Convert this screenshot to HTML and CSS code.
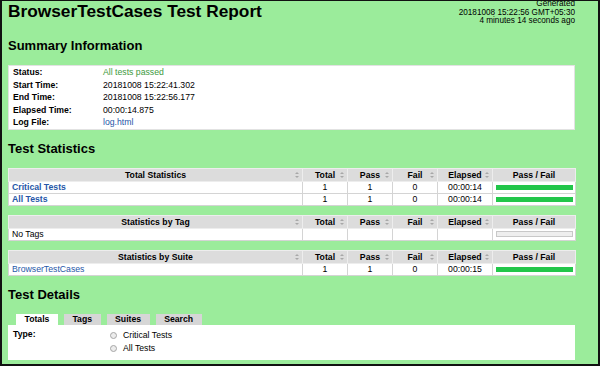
FILE: index.html
```html
<!DOCTYPE html>
<html lang="en">
<head>
    <meta charset="UTF-8">
    <title>BrowserTestCases Test Report</title>
    <link rel="stylesheet" href="styles.css">
</head>
<body>
    <div class="page">
        <div class="header">
            <h1>BrowserTestCases Test Report</h1>
            <div class="generated">
                Generated<br>
                20181008 15:22:56 GMT+05:30<br>
                4 minutes 14 seconds ago
            </div>
        </div>

        <h2>Summary Information</h2>
        <table class="summary">
            <tr><th>Status:</th><td class="pass">All tests passed</td></tr>
            <tr><th>Start Time:</th><td>20181008 15:22:41.302</td></tr>
            <tr><th>End Time:</th><td>20181008 15:22:56.177</td></tr>
            <tr><th>Elapsed Time:</th><td>00:00:14.875</td></tr>
            <tr><th>Log File:</th><td><a href="#">log.html</a></td></tr>
        </table>

        <h2>Test Statistics</h2>
        <table class="stats">
            <colgroup>
                <col class="col-name"><col class="col-num"><col class="col-num"><col class="col-num"><col class="col-time"><col class="col-bar">
            </colgroup>
            <tr>
                <th class="sort">Total Statistics</th>
                <th class="sort">Total</th>
                <th class="sort">Pass</th>
                <th class="sort">Fail</th>
                <th class="sort">Elapsed</th>
                <th>Pass / Fail</th>
            </tr>
            <tr>
                <td class="name"><a href="#">Critical Tests</a></td>
                <td>1</td><td>1</td><td>0</td><td>00:00:14</td>
                <td><div class="bar"></div></td>
            </tr>
            <tr>
                <td class="name"><a href="#">All Tests</a></td>
                <td>1</td><td>1</td><td>0</td><td>00:00:14</td>
                <td><div class="bar"></div></td>
            </tr>
        </table>

        <table class="stats">
            <colgroup>
                <col class="col-name"><col class="col-num"><col class="col-num"><col class="col-num"><col class="col-time"><col class="col-bar">
            </colgroup>
            <tr>
                <th class="sort">Statistics by Tag</th>
                <th class="sort">Total</th>
                <th class="sort">Pass</th>
                <th class="sort">Fail</th>
                <th class="sort">Elapsed</th>
                <th>Pass / Fail</th>
            </tr>
            <tr>
                <td class="name plain">No Tags</td>
                <td></td><td></td><td></td><td></td>
                <td><div class="bar empty"></div></td>
            </tr>
        </table>

        <table class="stats">
            <colgroup>
                <col class="col-name"><col class="col-num"><col class="col-num"><col class="col-num"><col class="col-time"><col class="col-bar">
            </colgroup>
            <tr>
                <th class="sort">Statistics by Suite</th>
                <th class="sort">Total</th>
                <th class="sort">Pass</th>
                <th class="sort">Fail</th>
                <th class="sort">Elapsed</th>
                <th>Pass / Fail</th>
            </tr>
            <tr>
                <td class="name"><a href="#" class="thin">BrowserTestCases</a></td>
                <td>1</td><td>1</td><td>0</td><td>00:00:15</td>
                <td><div class="bar"></div></td>
            </tr>
        </table>

        <h2>Test Details</h2>
        <div class="tabs">
            <div class="tab active">Totals</div>
            <div class="tab">Tags</div>
            <div class="tab">Suites</div>
            <div class="tab">Search</div>
        </div>
        <div class="details">
            <div class="type-label">Type:</div>
            <div class="options">
                <label class="option"><input type="radio" name="type">Critical Tests</label>
                <label class="option"><input type="radio" name="type">All Tests</label>
            </div>
        </div>
    </div>
</body>
</html>
```

FILE: styles.css
```css
body {
    margin: 0;
    font-family: "Liberation Sans", Arial, sans-serif;
    font-size: 8.7px;
    color: #000;
}
.page {
    width: 600px;
    height: 366px;
    box-sizing: border-box;
    border: 2px solid #111;
    border-top-width: 1px;
    padding: 0 23px 0 6px;
    background: #9bec9b;
    overflow: hidden;
}
a {
    color: #2657a8;
    text-decoration: none;
}

/* header */
.header {
    display: flex;
    justify-content: space-between;
    align-items: flex-start;
    height: 26px;
}
h1 {
    margin: 0;
    font-size: 17.3px;
    line-height: 20px;
    font-weight: bold;
}
.generated {
    margin-top: -1px;
    font-size: 8.2px;
    line-height: 8.7px;
    text-align: right;
}
h2 {
    margin: 11px 0;
    font-size: 13px;
    line-height: 16px;
    font-weight: bold;
}

/* summary */
.summary {
    width: 100%;
    border-collapse: collapse;
    background: #fff;
    border: 1px solid #e2e2e2;
}
.summary th, .summary td {
    padding: 0;
    height: 12.6px;
    line-height: 12.6px;
    text-align: left;
}
.summary th {
    width: 90px;
    padding-left: 4px;
    font-weight: bold;
}
.summary .pass {
    color: #3d9a3d;
}

/* statistics */
.stats {
    width: 100%;
    border-collapse: collapse;
    table-layout: fixed;
    background: #fff;
    margin-bottom: 9px;
}
.col-name { width: 294px; }
.col-num { width: 45px; }
.col-time { width: 55px; }
.col-bar { width: 83px; }
.stats th {
    position: relative;
    height: 12px;
    padding: 0;
    line-height: 12px;
    background: #dcdcdc;
    border: 1px solid #ededed;
    font-weight: bold;
}
.stats td {
    height: 11px;
    padding: 0;
    line-height: 11px;
    border: 1px solid #d4d4d4;
    text-align: center;
}
.stats td.name {
    text-align: left;
    padding-left: 3px;
}
.stats td.name a {
    font-weight: bold;
}
.stats td.name a.thin {
    font-weight: normal;
}
.sort::before, .sort::after {
    content: "";
    position: absolute;
    right: 3px;
    border-left: 2px solid transparent;
    border-right: 2px solid transparent;
}
.sort::before {
    top: 3px;
    border-bottom: 2px solid #a8a8a8;
}
.sort::after {
    bottom: 3px;
    border-top: 2px solid #a8a8a8;
}
.bar {
    width: 77px;
    height: 5px;
    margin: 0 auto;
    background: #22c64a;
}
.bar.empty {
    height: 6px;
    box-sizing: border-box;
    background: #eee;
    border: 1px solid #c8c8c8;
}

/* details */
.tabs {
    display: flex;
    gap: 6px;
    padding-left: 8px;
}
.tab {
    height: 11px;
    line-height: 11px;
    padding: 0 8.5px;
    background: #d6d6d6;
    font-weight: bold;
}
.tab.active {
    background: #fff;
}
.details {
    display: grid;
    grid-template-columns: 97px 1fr;
    padding: 4px 0 5px 5px;
    background: #fff;
}
.type-label {
    font-weight: bold;
    line-height: 11px;
}
.option {
    display: flex;
    align-items: center;
    height: 13px;
}
.option input {
    appearance: none;
    width: 7px;
    height: 7px;
    margin: 0 6px 0 0;
    border: 1px solid #a6a6a6;
    border-radius: 50%;
    background: #ececec;
}
```
